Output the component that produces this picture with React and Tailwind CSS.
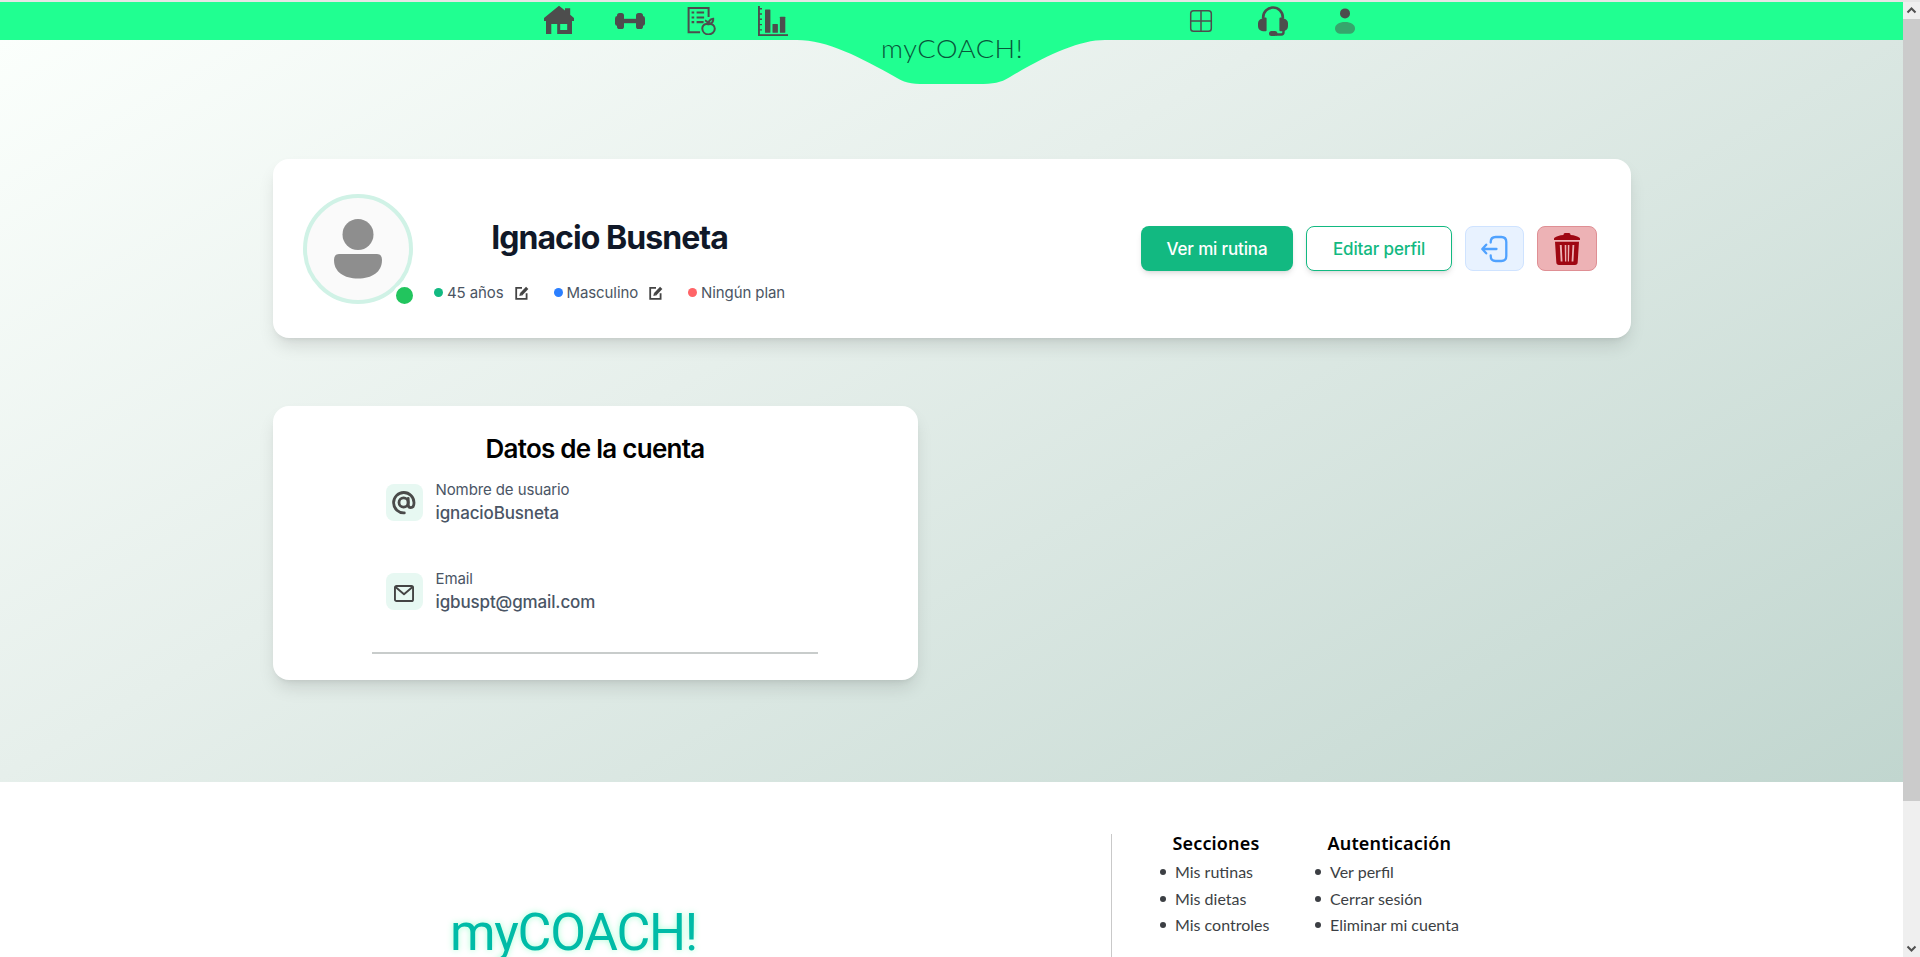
const metaText = "text-[15px] leading-5 tracking-[-0.100px] text-[#4b5563]";

function HomeIcon() {
  return (
    <svg viewBox="0 0 30 30" className="size-[30px]" fill="#4d4d4d">
      <path fillRule="evenodd" d="M15 .8 21 5.5V3.2h5.2v6.6L30 13v3h-2v13H13.2V19H7.3v10H2V16H0v-3ZM16.2 19v6h7v-6Z" />
    </svg>
  );
}

function DumbbellIcon() {
  return (
    <svg viewBox="0 0 30 30" className="size-[30px]" fill="#4d4d4d">
      <rect x="8" y="13.8" width="14" height="4.4" />
      <rect x="2" y="8" width="7" height="16" rx="2.6" />
      <rect x="21" y="8" width="7" height="16" rx="2.6" />
      <rect x="0" y="11" width="5" height="10" rx="2.4" />
      <rect x="25" y="11" width="5" height="10" rx="2.4" />
    </svg>
  );
}

function DietIcon() {
  return (
    <svg viewBox="0 0 30 30" className="size-[30px]" fill="none" stroke="#4d4d4d" strokeWidth="2">
      <path d="M22.600 12V3H2.600v24.2h11.5" />
      <path d="M5.600 7.5h2.6M10.600 7.5h7.5M5.600 12.5h2.6M10.600 12.5h7.5M5.600 17.2h2.6M10.600 17.2h7" strokeWidth="2.2" />
      <path d="M22.5 19.2c-4-1.200-6.400 1.600-6.200 4.600.2 3.200 2.800 5.600 6.200 5.600s6.300-2.400 6.300-5.600c0-3-2.500-5.800-6.300-4.600Z" />
      <path d="M22.600 19c-.2-1.800.8-4.800 4.600-5.200.3 3-1.600 4.700-4.600 5.200Zm-.4-.4c-.6-1.600-1.700-2.800-3.200-3.200" />
    </svg>
  );
}

function ChartIcon() {
  return (
    <svg viewBox="0 0 30 31" className="h-[31px] w-[30px]" fill="#4d4d4d">
      <path d="M0 1h1.900v30H0Z M1 3h3v1.400H1ZM1 8.300h3v1.400H1ZM1 13.600h3V15H1ZM1 18.900h3v1.400H1ZM1 24.200h3v1.400H1Z" />
      <rect x="7" y="4.500" width="5.400" height="23.300" rx=".6" />
      <rect x="14.500" y="19" width="5.400" height="8.800" rx=".6" />
      <rect x="21.900" y="11.700" width="5.400" height="16.100" rx=".6" />
      <rect x="0" y="29.200" width="30" height="1.800" />
    </svg>
  );
}

function GridIcon() {
  return (
    <svg viewBox="0 0 30 30" className="size-[30px]" fill="none" stroke="#4d4d4d" strokeWidth="1.500">
      <rect x="4.700" y="5.700" width="20.600" height="20.600" rx="2.800" />
      <path d="M15 5.700v20.600M4.700 16h20.600" />
    </svg>
  );
}

function HeadsetIcon() {
  return (
    <svg viewBox="0 0 30 31" className="h-[31px] w-[30px]" fill="#4d4d4d">
      <path d="M5.200 13.500V12a9.800 9.800 0 0 1 19.600 0v1.500" fill="none" stroke="#4d4d4d" strokeWidth="2.700" transform="translate(0 .3)" />
      <path d="M6.500 12.600h1.100a1 1 0 0 1 1 1v11.600a1 1 0 0 1-1 1H5a5 5 0 0 1-5-5v-2.600a5 5 0 0 1 4-4.900c.6-.7 1.500-1.100 2.500-1.100ZM23.500 12.600h-1.100a1 1 0 0 0-1 1v11.600a1 1 0 0 0 1 1H25a5 5 0 0 0 5-5v-2.600a5 5 0 0 0-4-4.900c-.6-.7-1.500-1.100-2.500-1.100Z" />
      <path d="M25.500 25v2.300a2.200 2.200 0 0 1-2.200 2.200H18" fill="none" stroke="#4d4d4d" strokeWidth="2.400" />
      <rect x="11" y="26" width="8.400" height="5" rx="2.500" />
    </svg>
  );
}

function UserIcon() {
  return (
    <svg viewBox="0 0 30 30" className="size-[30px]" fill="#4d4d4d">
      <circle cx="15" cy="8.400" r="5" />
      <path d="M25 23.200c0 4-3.200 5.600-6 5.600h-8c-2.800 0-6-1.600-6-5.600C5 19.700 9.300 17 15 17s10 2.700 10 6.200Z" fill="#36a56c" />
    </svg>
  );
}

function EditIcon() {
  return (
    <svg viewBox="0 0 14 14" className="h-[14px] w-[14px]" fill="none" stroke="#444" strokeWidth="1.800">
      <path d="M7 1.900H1.200v10.900h10.400V7.300" />
      <path d="m6 8.300 6.200-6.400" strokeWidth="3.200" />
      <path d="M4.300 9.900 5 7l2.300 2.300Z" fill="#444" stroke="none" />
    </svg>
  );
}

function LogoutIcon() {
  return (
    <svg viewBox="0 0 27 28" className="h-7 w-[27px]" fill="none" stroke="#50a2ff" strokeWidth="2.300" strokeLinecap="round" strokeLinejoin="round">
      <path d="M9.700 7.600V7c0-3 1.700-5 5-5h5.600c3.300 0 5 2 5 5v14c0 3-1.700 5-5 5h-5.600c-3.300 0-5-2-5-5v-.6" />
      <path d="M15.500 14H1.500M5.200 9.700 1.300 14l3.900 4.300" />
    </svg>
  );
}

function TrashIcon() {
  return (
    <svg viewBox="0 0 26 32" className="h-8 w-[26px]" fill="#9f0712">
      <path d="M9.500 1.500Q9.500 0 11 0h4q1.500 0 1.500 1.500V2c4 .3 7 1.300 9 2.700.5.400.5 1 .5 2.300H0c0-1.300 0-1.900.5-2.300 2-1.400 5-2.400 9-2.700Z" />
      <path fillRule="evenodd" d="M1 8.700h24l-1.300 20.500c-.1 1.700-1 2.800-2.700 2.800H5c-1.700 0-2.600-1.100-2.700-2.800ZM5.800 12l.9 16.500h1.800L7.700 12Zm4.900 0 .3 16.500h1.300V12Zm3.100 0v16.500H15l.4-16.500Zm4.700 0-.9 16.500h1.800l.9-16.500Z" />
    </svg>
  );
}

function AtIcon() {
  return (
    <svg viewBox="0 0 24 24" className="size-[24px]" fill="none" stroke="#4a4a4a" strokeWidth="2.800" strokeLinecap="round">
      <circle cx="11.600" cy="11.500" r="4.600" />
      <path d="M16.200 7.400v6.400c0 1.900 1.100 2.800 2.600 2.800s3.200-1.300 3.200-4.800A10.200 10.200 0 1 0 12.300 21.900" />
    </svg>
  );
}

function MailIcon() {
  return (
    <svg viewBox="0 0 20 17" className="h-[17px] w-5" fill="none" stroke="#444" strokeWidth="1.900" strokeLinejoin="round">
      <rect x=".95" y=".95" width="18.100" height="15.100" rx="1.600" />
      <path d="m1.500 2 8.500 7.200L18.500 2" />
    </svg>
  );
}

function Header() {
  return (
    <header className="relative z-10 flex h-[38px] shrink-0 justify-between bg-[#20ff91] pr-[543px] pl-[544px]">
      <nav className="flex gap-[41.200px] pt-[3px]">
        <HomeIcon />
        <DumbbellIcon />
        <DietIcon />
        <ChartIcon />
      </nav>
      <nav className="flex gap-[42px] pt-[3px]">
        <GridIcon />
        <HeadsetIcon />
        <UserIcon />
      </nav>
      <div className="absolute top-[37px] left-[797px] h-[46px] w-[310px]">
        <svg viewBox="0 0 310 46" className="h-[46px] w-[310px]" fill="#20ff91">
          <path d="M0 0V1H0C30 1 63 18 100 39C110 45 117 45 134 45H181C197 45 203 44 213 38C250 16 282 1 308 1V0Z" />
        </svg>
      </div>
      <div className="absolute top-[30px] left-[881px] origin-left scale-x-[1.090] font-['Lato'] text-[25px] leading-8 font-light tracking-[0.500px] text-[#08573a]">
        myCOACH!
      </div>
    </header>
  );
}

function Meta({ dot, children, editable }) {
  return (
    <div className="flex items-center">
      <span className={`mr-1 size-[9px] rounded-full ${dot}`} />
      <span className={metaText}>{children}</span>
      {editable && <span className="ml-[11px]"><EditIcon /></span>}
    </div>
  );
}

function ProfileCard() {
  return (
    <section className="flex h-[179px] items-center justify-between rounded-2xl bg-white pr-[34px] pl-[30px] shadow-[0_10px_18px_-3px_rgba(0,0,0,0.12),0_4px_6px_-4px_rgba(0,0,0,0.1)]">
      <div className="flex items-center">
        <div className="relative size-[110px]">
          <div className="flex size-[110px] items-center justify-center rounded-full border-4 border-[#d0f2e6] bg-[#fafafa]">
            <svg viewBox="0 0 48 60" className="mt-px h-[60px] w-12" fill="#8e8e8e">
              <circle cx="24" cy="15.500" r="15.500" />
              <path d="M5 35h38q5 0 5 6c0 12-10 18.500-24 18.500S0 53 0 41q0-6 5-6Z" />
            </svg>
          </div>
          <span className="absolute -right-[3px] -bottom-[3px] size-[23px] rounded-full border-[3px] border-white bg-[#22c55e]" />
        </div>
        <div className="ml-[21px] flex flex-col items-center pt-[23px]">
          <h1 className="font-['Inter'] text-[32px] leading-10 font-bold tracking-[-0.950px] text-[#101828]">Ignacio Busneta</h1>
          <div className="mt-[25px] flex gap-[25px]">
            <Meta dot="bg-[#12b981]" editable>45 años</Meta>
            <Meta dot="bg-[#2b7fff]" editable>Masculino</Meta>
            <Meta dot="bg-[#ff6467]">Ningún plan</Meta>
          </div>
        </div>
      </div>
      <div className="flex gap-[13px] text-[17px] font-[450] tracking-[-0.150px]">
        <button className="h-[45px] w-[152px] rounded-lg bg-[#12b981] pt-0.5 text-white shadow-md">Ver mi rutina</button>
        <button className="h-[45px] w-[146px] rounded-lg border border-[#12b981] bg-white pt-0.5 text-[#12b981] shadow-md">Editar perfil</button>
        <button className="flex h-[45px] w-[59px] items-center justify-center rounded-lg border border-[#cfe3ff] bg-[#e8f2ff]"><LogoutIcon /></button>
        <button className="flex h-[45px] w-[60px] items-center justify-center rounded-lg border border-[#df8f94] bg-[#edb2b5]"><TrashIcon /></button>
      </div>
    </section>
  );
}

function AccountRow({ icon, label, value }) {
  return (
    <div className="flex gap-[13px]">
      <span className="mt-[5px] flex size-[37px] items-center justify-center rounded-lg bg-[#e7f8f2]">{icon}</span>
      <div>
        <p className="text-[15px] leading-[22px] tracking-[-0.100px] text-[#4a5565]">{label}</p>
        <p className="text-[17px] leading-[25px] font-[450] tracking-[-0.130px] text-[#4a5565]">{value}</p>
      </div>
    </div>
  );
}

function AccountCard() {
  return (
    <section className="mt-[68px] flex h-[274px] w-[645px] flex-col items-center rounded-2xl bg-white pt-[27px] shadow-[0_10px_18px_-3px_rgba(0,0,0,0.12),0_4px_6px_-4px_rgba(0,0,0,0.1)]">
      <h2 className="mr-px text-[26px] leading-8 font-semibold tracking-[-0.740px] text-black">Datos de la cuenta</h2>
      <div className="mt-[14px] mr-[2px] flex h-[175px] w-[446px] flex-col gap-[42px] border-b-2 border-[#c8cccb] pl-[14px]">
        <AccountRow icon={<AtIcon />} label="Nombre de usuario" value="ignacioBusneta" />
        <AccountRow icon={<span className="pt-[3px]"><MailIcon /></span>} label="Email" value="igbuspt@gmail.com" />
      </div>
    </section>
  );
}

function FooterColumn({ title, items, width }) {
  return (
    <div className={width}>
      <h3 className="-mt-[3px] pl-[12.500px] font-['Noto_Sans'] text-[18px] leading-6 font-semibold tracking-[0.150px] text-black">{title}</h3>
      <ul className="mt-1 font-['Lato'] text-base leading-[26.500px] text-[#3c3f44]">
        {items.map((item) => (
          <li key={item} className="flex items-center gap-[9px]">
            <span className="size-[6px] rounded-full bg-[#3c3f44]" />
            {item}
          </li>
        ))}
      </ul>
    </div>
  );
}

function Footer() {
  return (
    <footer className="flex h-[175px] shrink-0 overflow-hidden bg-white pt-[52px] pl-[450px]">
      <div className="w-[661px] pt-[61px] font-['Roboto'] text-[52px] leading-[76px] tracking-[-1.300px] text-[#00bba7] [text-shadow:0_0_6px_rgba(32,255,145,0.4)]">
        myCOACH!
      </div>
      <div className="flex border-l border-[#c9c9c9] pl-[48px]">
        <FooterColumn width="w-[155px]" title="Secciones" items={["Mis rutinas", "Mis dietas", "Mis controles"]} />
        <FooterColumn width="w-[170px]" title="Autenticación" items={["Ver perfil", "Cerrar sesión", "Eliminar mi cuenta"]} />
      </div>
    </footer>
  );
}

function Scrollbar() {
  return (
    <div className="flex w-[17px] shrink-0 flex-col bg-[#efefef]">
      <svg viewBox="0 0 17 17" className="h-[17px] w-[17px]" fill="none" stroke="#505050" strokeWidth="2">
        <path d="m4.500 10.500 4-4 4 4" />
      </svg>
      <div className="h-[782px] bg-[#cbcbcb]" />
      <svg viewBox="0 0 17 17" className="mt-auto h-[17px] w-[17px]" fill="none" stroke="#505050" strokeWidth="2">
        <path d="m4.500 6.500 4 4 4-4" />
      </svg>
    </div>
  );
}

export default function App() {
  return (
    <div className="flex h-[957px] w-[1920px] flex-col overflow-hidden border-t-2 border-[#e6e6e6] font-['Inter',sans-serif]">
      <div className="flex min-h-0 flex-1">
        <div className="flex w-[1903px] flex-col">
          <Header />
          <main className="h-[742px] shrink-0 bg-[linear-gradient(150deg,#fbfffc,#e6efeb_40%,#c1d6cf)] pt-[119px] pr-[272px] pl-[273px]">
            <ProfileCard />
            <AccountCard />
          </main>
          <Footer />
        </div>
        <Scrollbar />
      </div>
    </div>
  );
}
